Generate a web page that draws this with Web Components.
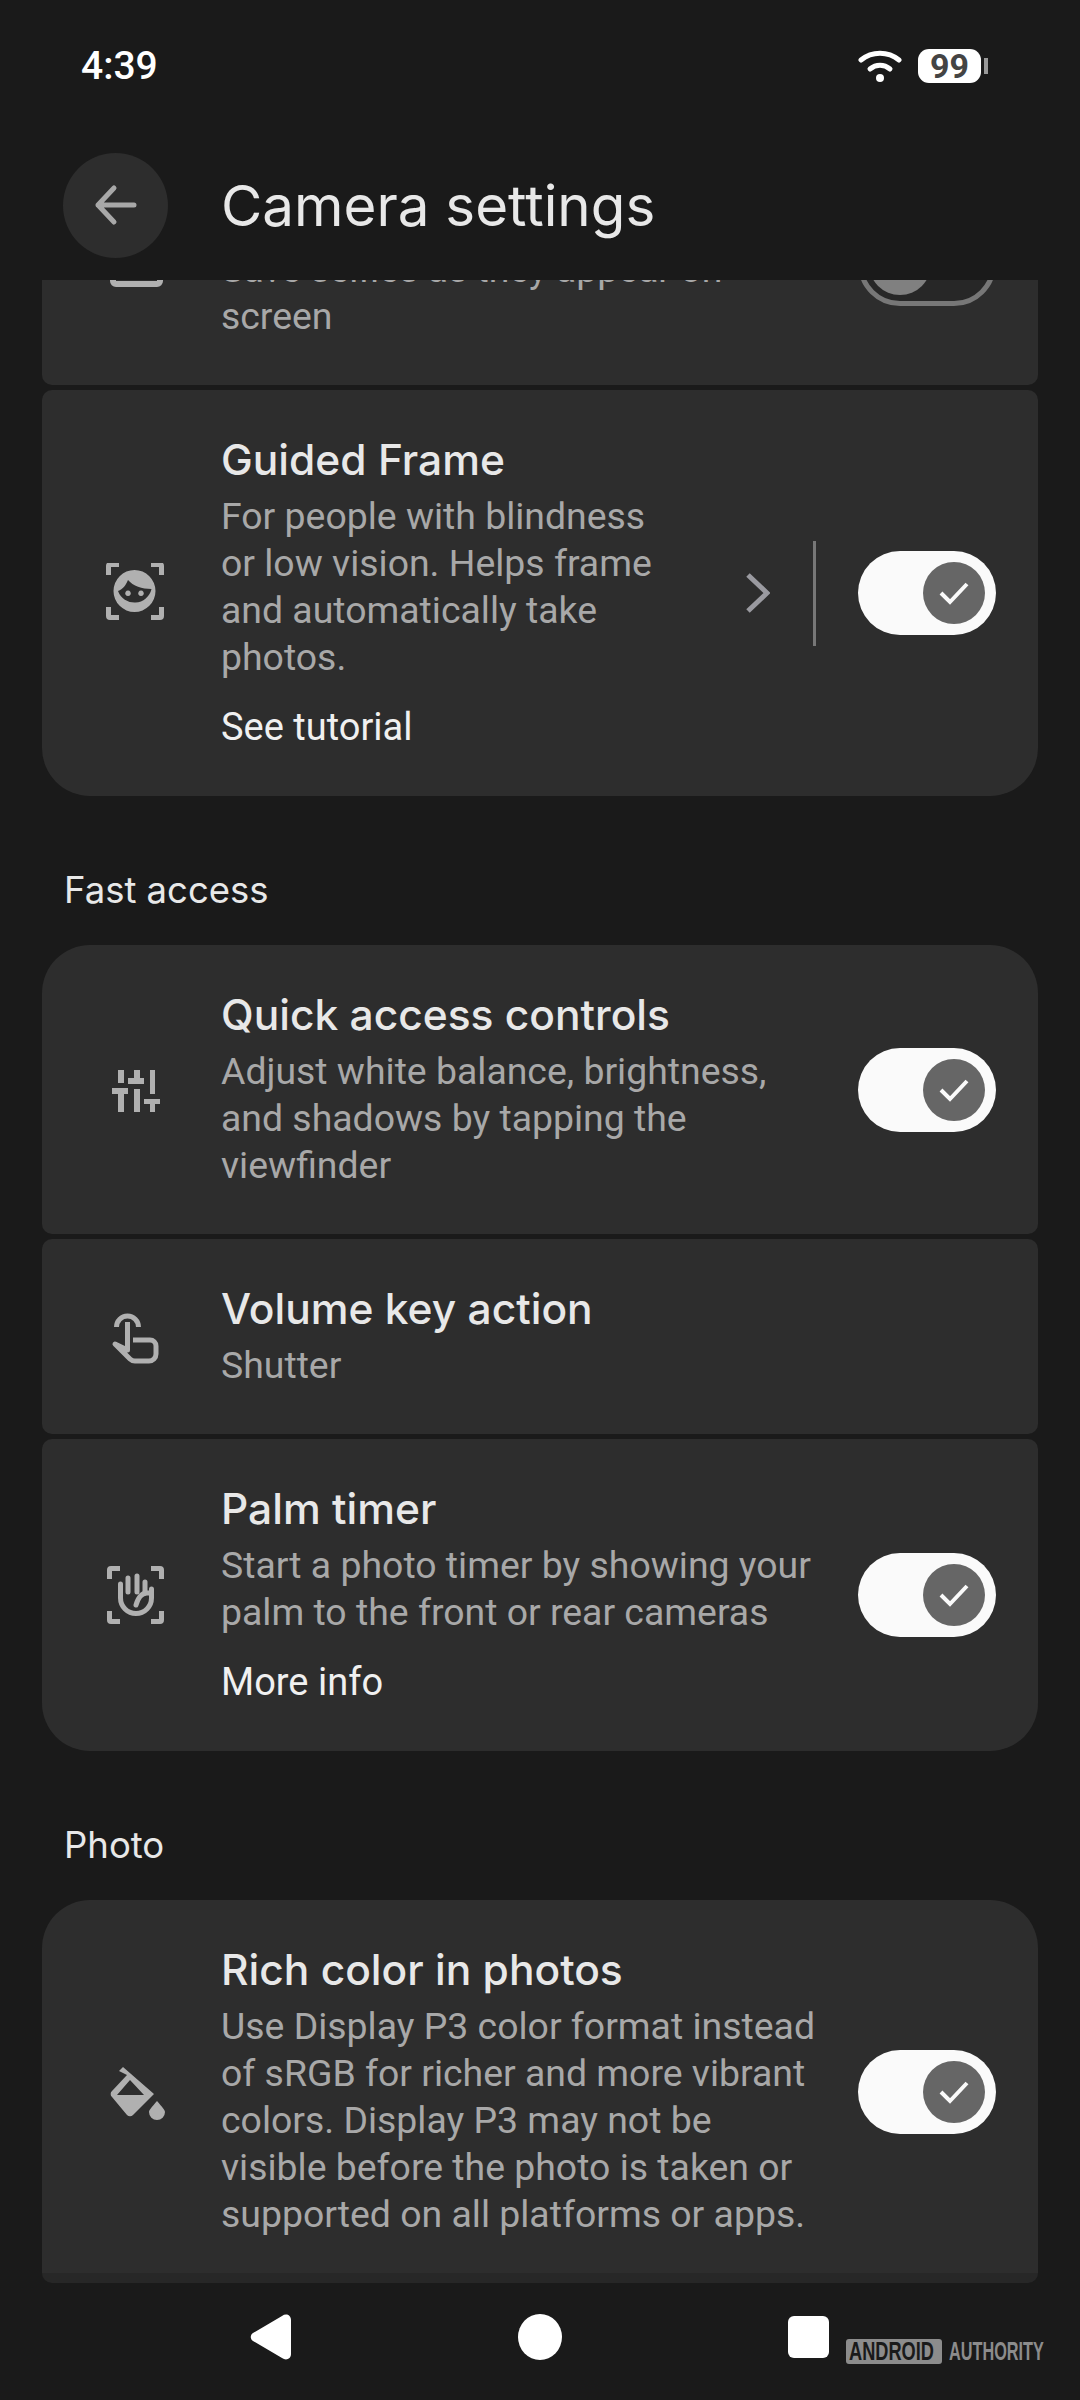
<!DOCTYPE html>
<html>
<head>
<meta charset="utf-8">
<title>Camera settings</title>
<style>
    html, body {
        margin: 0;
        height: 2400px;
        overflow: hidden;
        background: #1a1a1a;
        font-family: "Roboto", "Liberation Sans", sans-serif;
    }
    body {
        display: flex;
        flex-direction: column;
    }
    svg {
        display: block;
    }
</style>
</head>
<body>
<status-bar></status-bar>
<app-header>Camera settings</app-header>

<settings-list>
    <settings-card shape="middle" toggle="off">
        <svg slot="icon" width="60" height="60" viewBox="0 0 60 60">
            <path d="M8 10V47a3 3 0 0 0 3 3H52a3 3 0 0 0 3-3V10" fill="none" stroke="#b0b0b0" stroke-width="6"/>
        </svg>
        <span slot="body">Save selfies as they appear on<br>screen</span>
    </settings-card>

    <settings-card shape="last" toggle="on" link="See tutorial" chevron>
        <svg slot="icon" width="60" height="60" viewBox="0 0 60 60" fill="#b0b0b0">
            <g transform="translate(0,-2)">
                <path d="M1 14V5a4 4 0 0 1 4-4h9v5H6v8zM46 1h9a4 4 0 0 1 4 4v9h-5V6h-8zM1 46v9a4 4 0 0 0 4 4h9v-5H6v-8zM59 46v9a4 4 0 0 1-4 4h-9v-5h8v-8z"/>
                <path fill-rule="evenodd" d="M29.500 9a21 21 0 1 1 0 42a21 21 0 0 1 0-42zM13 30C18 28 21 24 23 19C28 25 37 28 46.500 28A17.500 17.500 0 0 1 13 30zM23 29.500a2.800 2.800 0 1 0 0.010 0zM36 29.500a2.800 2.800 0 1 0 0.010 0z"/>
            </g>
        </svg>
        <span slot="title">Guided Frame</span>
        <span slot="body">For people with blindness<br>or low vision. Helps frame<br>and automatically take<br>photos.</span>
    </settings-card>

    <section-label>Fast access</section-label>

    <settings-card shape="first" toggle="on">
        <svg slot="icon" width="60" height="60" viewBox="0 0 60 60" fill="#b0b0b0">
            <path d="M13 10h6v13h-6zM7 28h16v6h-4v18h-6V34H7zM29 10h6v8h4v6H23v-6h6zM29 29h6v23h-6zM45 10h5v24h-5zM39 39h16v5h-5v8h-5v-8h-6z"/>
        </svg>
        <span slot="title">Quick access controls</span>
        <span slot="body">Adjust white balance, brightness,<br>and shadows by tapping the<br>viewfinder</span>
    </settings-card>

    <settings-card shape="middle">
        <svg slot="icon" width="60" height="60" viewBox="0 0 60 60" fill="none" stroke="#b0b0b0" stroke-width="5" stroke-linejoin="round">
            <path d="M11.500 20a11 11 0 1 1 22 0"/>
            <path d="M22.500 15V43L10 37L25 52a7 7 0 0 0 5 2H44a7 7 0 0 0 7-7V39a6 6 0 0 0-6-6H28"/>
        </svg>
        <span slot="title">Volume key action</span>
        <span slot="body">Shutter</span>
    </settings-card>

    <settings-card shape="last" toggle="on" link="More info">
        <svg slot="icon" width="60" height="60" viewBox="0 0 60 60" fill="#b0b0b0">
            <path d="M2 14V5a4 4 0 0 1 4-4h9v5H7v8zM46 1h9a4 4 0 0 1 4 4v9h-5V6h-8zM2 46v9a4 4 0 0 0 4 4h9v-5H7v-8zM59 46v9a4 4 0 0 1-4 4h-9v-5h8v-8z"/>
            <g fill="none" stroke="#b0b0b0" stroke-width="5" stroke-linecap="round">
                <path d="M15.500 19V33a15.500 15.500 0 0 0 31 0V24"/>
                <path d="M46 28h-4c-5 0-9 5-11 12"/>
                <path d="M23 13V27M32 11V27M40 17V27"/>
            </g>
        </svg>
        <span slot="title">Palm timer</span>
        <span slot="body">Start a photo timer by showing your<br>palm to the front or rear cameras</span>
    </settings-card>

    <section-label>Photo</section-label>

    <settings-card shape="first" toggle="on">
        <svg slot="icon" width="60" height="60" viewBox="0 0 60 60" fill="#b0b0b0">
            <path fill-rule="evenodd" d="M18 5L49 32L28 53a4 4 0 0 1-6 0L7 35a4 4 0 0 1 0-6L22 13L14 9zM25 18L12 33H39z"/>
            <path d="M52 39c5 6 8 9 8 11a8 8 0 0 1-16 0c0-2 3-5 8-11z"/>
        </svg>
        <span slot="title">Rich color in photos</span>
        <span slot="body">Use Display P3 color format instead<br>of sRGB for richer and more vibrant<br>colors. Display P3 may not be<br>visible before the photo is taken or<br>supported on all platforms or apps.</span>
    </settings-card>
</settings-list>

<nav-bar></nav-bar>
<water-mark></water-mark>

<script>
class StatusBar extends HTMLElement {
    static get template() {
        return `
            <style>
                :host {
                    display: flex;
                    align-items: center;
                    justify-content: space-between;
                    height: 128px;
                    padding: 2px 92px 0 81px;
                    flex: none;
                }
                .time {
                    font: 500 39px "Roboto", sans-serif;
                    color: #fff;
                }
                .right {
                    display: flex;
                    align-items: center;
                }
                .battery {
                    width: 63px;
                    height: 34px;
                    margin-left: 16px;
                    border-radius: 11px;
                    background: #fff;
                    color: #444;
                    font: 700 34px/34px "Roboto", sans-serif;
                    text-align: center;
                }
                .nub {
                    width: 4px;
                    height: 16px;
                    margin-left: 3px;
                    background: #999;
                }
            </style>
            <span class="time">4:39</span>
            <div class="right">
                <svg width="44" height="34" viewBox="0 0 44 34" fill="none" stroke="#fff" stroke-width="5" stroke-linecap="round">
                    <path d="M3 11c11-9 27-9 38 0"/>
                    <path d="M12 20c6-5 14-5 20 0"/>
                    <circle cx="22" cy="29" r="4" fill="#fff" stroke="none"/>
                </svg>
                <span class="battery">99</span>
                <span class="nub"></span>
            </div>
        `;
    }
    constructor() {
        super();
        this.attachShadow({ mode: 'open' }).innerHTML = StatusBar.template;
    }
}

class AppHeader extends HTMLElement {
    static get template() {
        return `
            <style>
                :host {
                    display: flex;
                    align-items: center;
                    height: 150px;
                    padding-left: 63px;
                    flex: none;
                }
                .back {
                    display: flex;
                    align-items: center;
                    justify-content: center;
                    width: 105px;
                    height: 105px;
                    border-radius: 50%;
                    background: #2d2d2d;
                }
                h1 {
                    margin: 0 0 0 53px;
                    font: 400 56.500px "Inter", sans-serif;
                    color: #e8e8e8;
                }
            </style>
            <div class="back">
                <svg width="43" height="42" viewBox="0 0 43 42" fill="none" stroke="#a8a8a8" stroke-width="5" stroke-linecap="round" stroke-linejoin="round">
                    <path d="M40 21H4M20 4L4 21l16 17"/>
                </svg>
            </div>
            <h1><slot></slot></h1>
        `;
    }
    constructor() {
        super();
        this.attachShadow({ mode: 'open' }).innerHTML = AppHeader.template;
    }
}

class SettingsList extends HTMLElement {
    static get template() {
        return `
            <style>
                :host {
                    display: block;
                    position: relative;
                    height: 2003px;
                    overflow: hidden;
                    padding: 0 42px;
                    flex: none;
                }
                .content {
                    display: flex;
                    flex-direction: column;
                    margin-top: -137px;
                }
                .scrim {
                    position: absolute;
                    left: 0;
                    right: 0;
                    bottom: 0;
                    height: 10px;
                    background: #1a1a1a;
                    opacity: .3;
                }
            </style>
            <div class="content"><slot></slot></div>
            <div class="scrim"></div>
        `;
    }
    constructor() {
        super();
        this.attachShadow({ mode: 'open' }).innerHTML = SettingsList.template;
    }
}

class SectionLabel extends HTMLElement {
    static get template() {
        return `
            <style>
                :host {
                    display: block;
                    padding: 71px 22px 32px;
                    font: 400 36.500px/46px "Inter", sans-serif;
                    color: #e8e8e8;
                }
            </style>
            <slot></slot>
        `;
    }
    constructor() {
        super();
        this.attachShadow({ mode: 'open' }).innerHTML = SectionLabel.template;
    }
}

class ToggleSwitch extends HTMLElement {
    static get template() {
        return `
            <style>
                :host {
                    display: flex;
                    align-items: center;
                    justify-content: flex-end;
                    box-sizing: border-box;
                    width: 138px;
                    height: 84px;
                    padding: 0 11px;
                    border-radius: 42px;
                    background: #fafafa;
                    flex: none;
                }
                .thumb {
                    display: flex;
                    align-items: center;
                    justify-content: center;
                    width: 62px;
                    height: 62px;
                    border-radius: 50%;
                    background: #666;
                }
                :host([off]) {
                    justify-content: flex-start;
                    background: #272727;
                    border: 5px solid #777;
                    padding: 0 6px;
                }
                :host([off]) .thumb {
                    background: #808080;
                }
                :host([off]) svg {
                    display: none;
                }
            </style>
            <div class="thumb">
                <svg width="30" height="24" viewBox="0 0 30 24" fill="none" stroke="#fafafa" stroke-width="4">
                    <path d="M2 12l9 9L28 3"/>
                </svg>
            </div>
        `;
    }
    constructor() {
        super();
        this.attachShadow({ mode: 'open' }).innerHTML = ToggleSwitch.template;
    }
}

class SettingsCard extends HTMLElement {
    static get template() {
        return `
            <style>
                :host {
                    display: flex;
                    align-items: center;
                    margin-bottom: 5px;
                    padding-right: 42px;
                    border-radius: 10px;
                    background: #2d2d2d;
                }
                :host([shape="first"]) {
                    border-radius: 48px 48px 10px 10px;
                }
                :host([shape="last"]) {
                    border-radius: 10px 10px 48px 48px;
                    margin-bottom: 0;
                }
                .icon {
                    display: flex;
                    justify-content: center;
                    box-sizing: border-box;
                    width: 179px;
                    padding-left: 7px;
                    flex: none;
                }
                .text {
                    flex: 1;
                    min-width: 0;
                    padding: 40.500px 0 45.500px;
                    white-space: nowrap;
                }
                .title {
                    height: 58px;
                    margin-bottom: 4px;
                    font: 500 42.500px/58px "Inter", sans-serif;
                    color: #e8e8e8;
                }
                .body {
                    font: 400 37.400px/47px "Roboto", sans-serif;
                    color: #a8a8a8;
                }
                .link {
                    margin-top: 23px;
                    font: 400 38px/47px "Roboto", sans-serif;
                    color: #f0f0f0;
                }
                .tail {
                    display: flex;
                    align-items: center;
                    flex: none;
                }
                .chevron {
                    margin-right: 43px;
                }
                .divider {
                    width: 3px;
                    height: 105px;
                    margin-right: 42px;
                    background: #777;
                }
            </style>
            <div class="icon"><slot name="icon"></slot></div>
            <div class="text">
                <div class="title"><slot name="title"></slot></div>
                <div class="body"><slot name="body"></slot></div>
            </div>
            <div class="tail"></div>
        `;
    }
    constructor() {
        super();
        this._shadowRoot = this.attachShadow({ mode: 'open' });
        this._shadowRoot.innerHTML = SettingsCard.template;
    }
    connectedCallback() {
        const text = this._shadowRoot.querySelector('.text');
        const tail = this._shadowRoot.querySelector('.tail');
        const link = this.getAttribute('link');
        if (link) {
            const el = document.createElement('div');
            el.className = 'link';
            el.textContent = link;
            text.appendChild(el);
        }
        let html = '';
        if (this.hasAttribute('chevron')) {
            html += `<svg class="chevron" width="24" height="40" viewBox="0 0 24 40" fill="none" stroke="#9a9aa0" stroke-width="5"><path d="M2 2l19 18L2 38"/></svg><div class="divider"></div>`;
        }
        const state = this.getAttribute('toggle');
        if (state) {
            html += `<toggle-switch ${state === 'off' ? 'off' : ''}></toggle-switch>`;
        }
        tail.innerHTML = html;
    }
}

class NavBar extends HTMLElement {
    static get template() {
        return `
            <style>
                :host {
                    display: flex;
                    align-items: center;
                    gap: 226px;
                    height: 108px;
                    padding-left: 250px;
                    flex: none;
                }
            </style>
            <svg width="42" height="46" viewBox="0 0 42 46" fill="#fff">
                <path d="M32 2c4-3 9-1 9 4v34c0 5-5 7-9 4L3 27c-3-2-3-6 0-8z"/>
            </svg>
            <svg width="44" height="46" viewBox="0 0 44 46" fill="#fff">
                <ellipse cx="22" cy="23" rx="22" ry="23"/>
            </svg>
            <svg width="41" height="42" viewBox="0 0 41 42" fill="#fff">
                <rect width="41" height="42" rx="6"/>
            </svg>
        `;
    }
    constructor() {
        super();
        this.attachShadow({ mode: 'open' }).innerHTML = NavBar.template;
    }
}

class WaterMark extends HTMLElement {
    static get template() {
        return `
            <style>
                :host {
                    position: absolute;
                    left: 846px;
                    top: 2339px;
                    display: flex;
                    align-items: center;
                    gap: 7px;
                    font: 700 26px/25px "Liberation Sans", sans-serif;
                    color: #8c8c8c;
                }
                .box {
                    display: block;
                    width: 96px;
                    height: 25px;
                    border-radius: 3px;
                    background: #8c8c8c;
                    color: #1a1a1a;
                }
                .plain {
                    display: block;
                    width: 95px;
                }
                b {
                    display: inline-block;
                    white-space: nowrap;
                    transform-origin: 0 50%;
                }
                .box b {
                    transform: translateX(3px) scaleX(.7);
                }
                .plain b {
                    transform: scaleX(.625);
                }
            </style>
            <span class="box"><b>ANDROID</b></span>
            <span class="plain"><b>AUTHORITY</b></span>
        `;
    }
    constructor() {
        super();
        this.attachShadow({ mode: 'open' }).innerHTML = WaterMark.template;
    }
}

customElements.define('status-bar', StatusBar);
customElements.define('app-header', AppHeader);
customElements.define('settings-list', SettingsList);
customElements.define('section-label', SectionLabel);
customElements.define('toggle-switch', ToggleSwitch);
customElements.define('settings-card', SettingsCard);
customElements.define('nav-bar', NavBar);
customElements.define('water-mark', WaterMark);
</script>
</body>
</html>
